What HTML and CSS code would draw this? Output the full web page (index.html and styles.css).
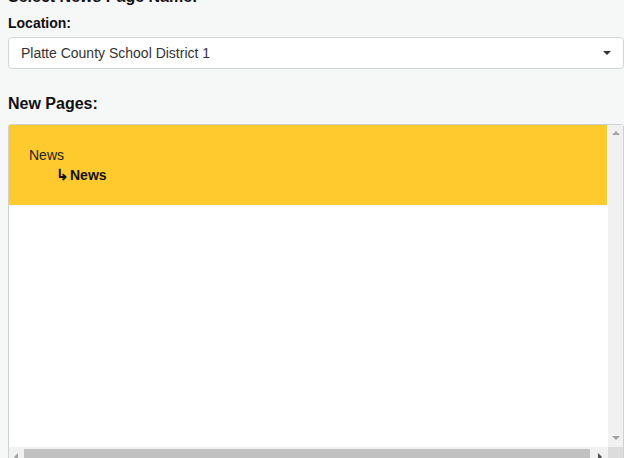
FILE: index.html
```html
<!DOCTYPE html>
<html>
<head>
<meta charset="utf-8">
<link rel="stylesheet" href="styles.css">
</head>
<body>
<div class="page">
  <div class="title">Select News Page Name:</div>
  <label class="label">Location:</label>
  <div class="select">
    <span class="select-text">Platte County School District 1</span>
    <span class="caret"></span>
  </div>
  <div class="section-label">New Pages:</div>
  <div class="listbox">
    <div class="list-content">
      <div class="item">
        <div class="item-name">News</div>
        <div class="item-child"><span class="arrow">↳</span>News</div>
      </div>
    </div>
    <div class="vbar">
      <span class="tri tri-up"></span>
      <span class="tri tri-down"></span>
    </div>
    <div class="hbar">
      <span class="tri tri-left"></span>
      <span class="thumb"></span>
      <span class="tri tri-right"></span>
    </div>
    <div class="corner"></div>
  </div>
</div>
</body>
</html>
```

FILE: styles.css
```css
html, body {
  margin: 0;
  padding: 0;
  background: #f6f7f7;
  overflow: hidden;
}
body {
  font-family: "Liberation Sans", Arial, sans-serif;
  color: #111;
}
.page {
  padding-left: 8px;
  width: 616px;
}
.title {
  margin-top: -12px;
  font-size: 16px;
  line-height: 18px;
  font-weight: bold;
  color: #111;
}
.label {
  display: block;
  margin-top: 9px;
  font-size: 14px;
  line-height: 16px;
  font-weight: bold;
}
.select {
  margin-top: 6px;
  box-sizing: border-box;
  height: 32px;
  background: #fff;
  border: 1px solid #d3d5d6;
  border-radius: 4px;
  display: flex;
  align-items: center;
  padding: 0 12px 0 12px;
  justify-content: space-between;
}
.select-text {
  font-size: 14px;
  color: #333;
}
.caret {
  width: 0;
  height: 0;
  border-left: 4px solid transparent;
  border-right: 4px solid transparent;
  border-top: 4px solid #333;
}
.section-label {
  margin-top: 26px;
  font-size: 16px;
  line-height: 18px;
  font-weight: bold;
}
.listbox {
  margin-top: 11px;
  box-sizing: border-box;
  width: 616px;
  height: 342px;
  border: 1px solid #cfd2d3;
  border-radius: 3px 3px 0 0;
  background: #fff;
  display: grid;
  grid-template-columns: 1fr 15px;
  grid-template-rows: 322px 15px;
}
.list-content {
  overflow: hidden;
  padding-right: 1px;
}
.item {
  background: #ffca2e;
  height: 80px;
  box-sizing: border-box;
  padding: 21px 20px 0 20px;
  font-size: 14px;
  line-height: 19px;
}
.item-name {
  color: #222;
}
.item-child {
  padding-left: 27px;
  font-weight: bold;
  color: #111;
}
.arrow {
  font-weight: bold;
  font-size: 15px;
  margin-right: 1px;
}
.vbar {
  background: #f1f1f1;
  display: flex;
  flex-direction: column;
  justify-content: space-between;
  align-items: center;
  padding: 6px 0 7px;
}
.hbar {
  background: #f1f1f1;
  display: flex;
  align-items: flex-start;
  padding-top: 2px;
  padding-left: 5px;
  gap: 6px;
}
.thumb {
  flex: 0 0 566px;
  height: 11px;
  background: #c1c1c1;
}
.corner {
  background: #dcdcdc;
}
.tri {
  width: 0;
  height: 0;
}
.tri-up {
  border-left: 4px solid transparent;
  border-right: 4px solid transparent;
  border-bottom: 4px solid #a3a3a3;
}
.tri-down {
  border-left: 4px solid transparent;
  border-right: 4px solid transparent;
  border-top: 4px solid #a3a3a3;
}
.tri-left {
  margin-top: 4px;
  border-top: 4px solid transparent;
  border-bottom: 4px solid transparent;
  border-right: 4px solid #a3a3a3;
}
.tri-right {
  margin-top: 4px;
  margin-left: 2px;
  border-top: 4px solid transparent;
  border-bottom: 4px solid transparent;
  border-left: 4px solid #505050;
}
```
